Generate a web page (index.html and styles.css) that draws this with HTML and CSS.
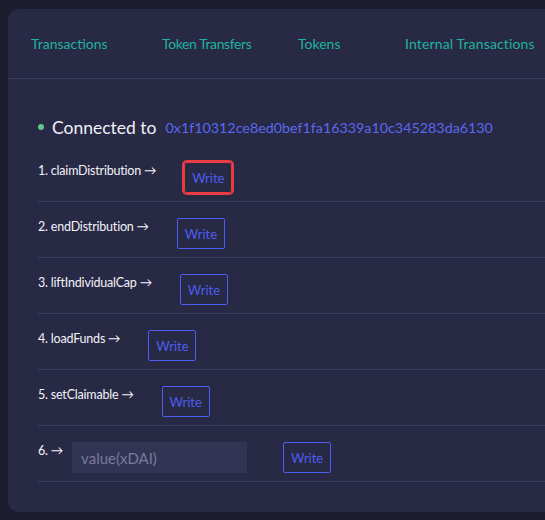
FILE: index.html
```html
<!DOCTYPE html>
<html lang="en">
<head>
<meta charset="utf-8">
<title>Write Contract</title>
<link rel="stylesheet" href="styles.css">
</head>
<body>
<div class="card">
  <nav class="tabs">
    <a class="tab tab-tx">Transactions</a>
    <a class="tab tab-tt">Token Transfers</a>
    <a class="tab tab-tk">Tokens</a>
    <a class="tab tab-it">Internal Transactions</a>
  </nav>
  <section class="body">
    <div class="connected">
      <span class="dot"></span>
      <span class="conn-label">Connected to</span>
      <a class="address">0x1f10312ce8ed0bef1fa16339a10c345283da6130</a>
    </div>
    <div class="fn-list">
      <div class="fn-row">
        <span class="fn-name">1. claimDistribution →</span>
        <button class="btn-write focused">Write</button>
      </div>
      <div class="fn-row">
        <span class="fn-name">2. endDistribution →</span>
        <button class="btn-write">Write</button>
      </div>
      <div class="fn-row">
        <span class="fn-name">3. liftIndividualCap →</span>
        <button class="btn-write">Write</button>
      </div>
      <div class="fn-row">
        <span class="fn-name">4. loadFunds →</span>
        <button class="btn-write">Write</button>
      </div>
      <div class="fn-row">
        <span class="fn-name">5. setClaimable →</span>
        <button class="btn-write">Write</button>
      </div>
      <div class="fn-row">
        <span class="fn-name">6. →</span>
        <input class="fn-input" type="text" placeholder="value(xDAI)">
        <button class="btn-write btn-after-input">Write</button>
      </div>
    </div>
  </section>
</div>
</body>
</html>
```
FILE: styles.css
```css
html, body {
  margin: 0;
  padding: 0;
}

body {
  background: #1c1c2f;
  font-family: "Lato", "Open Sans", sans-serif;
  overflow: hidden;
  height: 520px;
}

.card {
  margin: 9px 0 0 8px;
  width: 537px;
  height: 503px;
  background: #282944;
  border-radius: 11px 0 0 11px;
  box-sizing: border-box;
}

.tabs {
  display: flex;
  align-items: center;
  height: 70px;
  border-bottom: 1px solid #3d3d5e;
  padding-left: 23px;
  box-sizing: border-box;
}

.tab {
  flex: none;
  color: #1fb39f;
  font-size: 14px;
  white-space: nowrap;
  cursor: pointer;
}

.tab-tx { width: 131px; }
.tab-tt { width: 136px; letter-spacing: -0.4px; }
.tab-tk { width: 107px; }
.tab-it { letter-spacing: 0.15px; }

.body {
  padding: 37px 0 0 30px;
}

.connected {
  display: flex;
  align-items: center;
  height: 22px;
  margin-bottom: 8px;
}

.dot {
  width: 6px;
  height: 6px;
  border-radius: 50%;
  background: #5ec68d;
  margin-right: 8px;
}

.conn-label {
  color: #f0f0f6;
  font-size: 17.5px;
  margin-right: 9px;
}

.address {
  color: #5a68f0;
  font-size: 14.3px;
}

.fn-row {
  display: flex;
  align-items: flex-start;
  padding: 16px 0 8px;
  border-bottom: 1px solid #3d3d5e;
}

.fn-name {
  color: #f2f2f8;
  font-size: 12.5px;
  line-height: 18px;
  letter-spacing: -0.2px;
  white-space: nowrap;
  margin-right: 28px;
}

.btn-write {
  flex: none;
  width: 48px;
  height: 31px;
  background: transparent;
  border: 1px solid #4c5ef0;
  border-radius: 2px;
  color: #4c5ef0;
  font-family: inherit;
  font-size: 13px;
  padding: 0;
  cursor: pointer;
}

.btn-write.focused {
  border: 1px solid #ea3b42;
  box-shadow: 0 0 0 2px #ea3b42;
  border-radius: 3px;
}

.fn-name + .fn-input {
  margin-left: -19px;
}

.fn-input {
  flex: none;
  width: 175px;
  height: 31px;
  box-sizing: border-box;
  background: #323453;
  border: none;
  outline: none;
  color: #d0d0e0;
  font-family: inherit;
  font-size: 15px;
  padding: 0 9px;
}

.fn-input::placeholder {
  color: #787a9e;
}

.btn-after-input {
  margin-left: 36px;
}
```
